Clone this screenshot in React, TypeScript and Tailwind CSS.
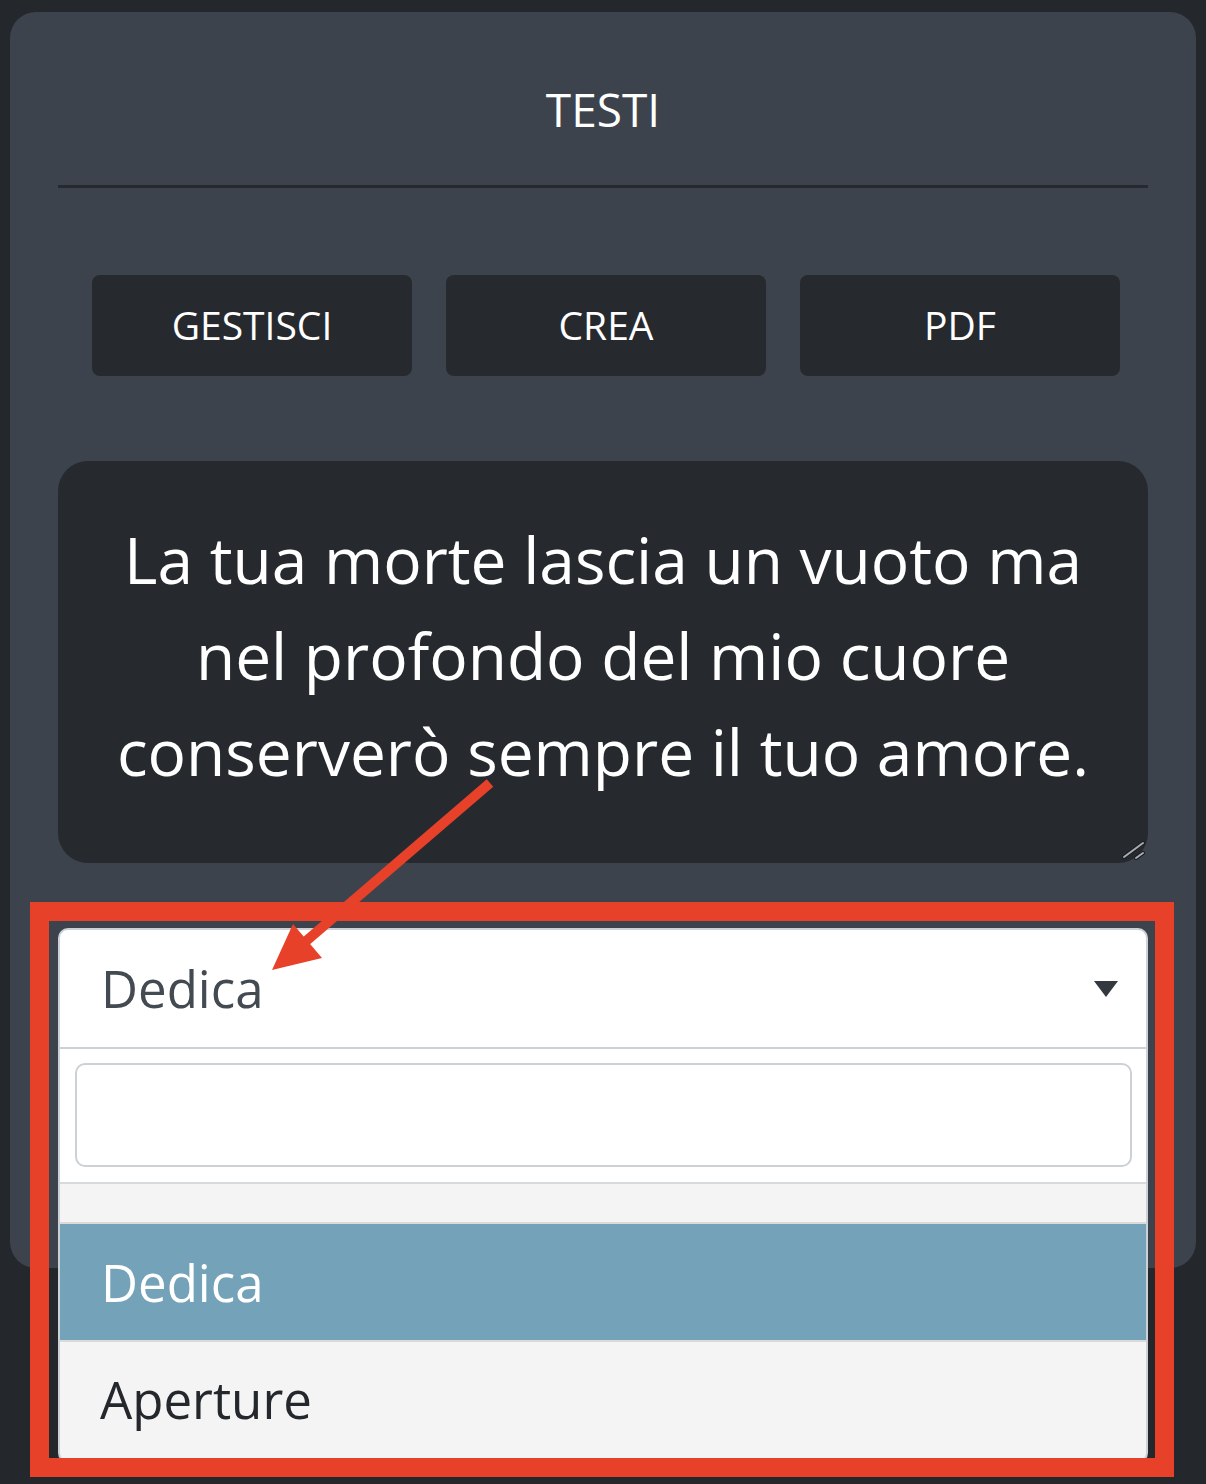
import React from "react"

const font = { fontFamily: '"Open Sans", "Noto Sans", sans-serif' }

const ResizeHandle = () => (
  <svg className="absolute right-0 bottom-0" width="30" height="26" viewBox="0 0 30 26">
    <line x1="6" y1="20" x2="25" y2="6" stroke="#1a1d21" strokeWidth="4" strokeLinecap="round" />
    <line x1="6" y1="20" x2="25" y2="6" stroke="#a9adb2" strokeWidth="2" strokeLinecap="round" />
    <line x1="18" y1="21" x2="25" y2="16" stroke="#1a1d21" strokeWidth="4" strokeLinecap="round" />
    <line x1="18" y1="21" x2="25" y2="16" stroke="#a9adb2" strokeWidth="2" strokeLinecap="round" />
  </svg>
)

const App = () => {
  const buttons = ["GESTISCI", "CREA", "PDF"]

  return (
    <div className="relative w-[1206px] h-[1484px] bg-[#24282d] px-[10px] pt-[12px] overflow-hidden" style={font}>
      {/* Card */}
      <div className="rounded-[26px] bg-[#3d434c] px-[48px] pb-[219px]">
        {/* Title */}
        <div className="pt-[74px] pb-[53px] text-center text-[46px] leading-none text-white">TESTI</div>
        <div className="h-[3px] bg-[#262a2f]" />

        {/* Buttons */}
        <div className="flex gap-[34px] ml-[34px] mt-[87px]">
          {buttons.map((b) => (
            <button
              key={b}
              className="w-[320px] h-[101px] rounded-[8px] bg-[#262a2f] text-white text-[39px] flex items-center justify-center pb-[1px]"
            >
              {b}
            </button>
          ))}
        </div>

        {/* Text area */}
        <div className="relative mt-[85px] h-[402px] rounded-[30px] bg-[#262a2f] pt-[51px] text-center text-white text-[64px] leading-[96px]">
          La tua morte lascia un vuoto ma
          <br />
          nel profondo del mio cuore
          <br />
          conserverò sempre il tuo amore.
          <ResizeHandle />
        </div>

        {/* Select */}
        <div className="relative mt-[65px]">
          <div className="h-[121px] bg-white border-2 border-[#ccd1d6] rounded-t-[10px] flex items-center justify-between pl-[41px] pr-[28px]">
            <span className="text-[51px] text-[#444a52]">Dedica</span>
            <svg width="24" height="16" viewBox="0 0 24 16">
              <polygon points="0,0 24,0 12,16" fill="#33393f" />
            </svg>
          </div>

          {/* Dropdown */}
          <div className="absolute left-0 right-0 top-full h-[414px] bg-[#f4f4f4] border-x-2 border-b-2 border-[#ccd1d6] rounded-b-[10px] overflow-hidden">
            <div className="bg-white pt-[14px] pb-[15px] pl-[15px] pr-[14px] border-b-2 border-[#d7dadd]">
              <div className="h-[104px] border-2 border-[#ccd1d6] rounded-[10px] bg-white" />
            </div>
            <div className="h-[40px] border-b-2 border-[#dadada]" />
            <div className="h-[118px] bg-[#74a2b9] border-b-2 border-[#dadada] flex items-center pl-[41px] text-[51px] text-white">
              Dedica
            </div>
            <div className="h-[114px] flex items-center pl-[40px] text-[51px] text-[#24282d]">Aperture</div>
          </div>
        </div>
      </div>

      {/* Annotation: red frame */}
      <div className="absolute left-[30px] top-[902px] w-[1144px] h-[575px] border-[19px] border-[#e8412a] pointer-events-none" />

      {/* Annotation: red arrow */}
      <svg className="absolute left-0 top-0 pointer-events-none" width="1206" height="1484">
        <line x1="490" y1="783" x2="305" y2="942" stroke="#e8412a" strokeWidth="10" />
        <polygon points="272,970 293,924 322,958" fill="#e8412a" />
      </svg>
    </div>
  )
}

export default App
